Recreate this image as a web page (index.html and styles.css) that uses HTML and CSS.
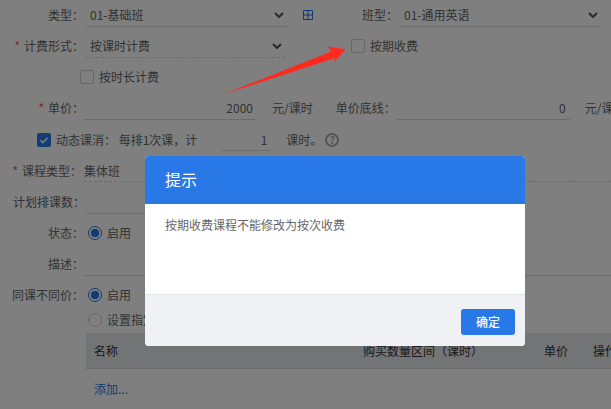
FILE: index.html
```html
<!DOCTYPE html>
<html lang="zh-CN">
<head>
<meta charset="utf-8">
<title>课程设置</title>
<link rel="stylesheet" href="styles.css">
</head>
<body>
<form class="form">
  <div class="row row-up">
    <label class="label">类型：</label>
    <div class="field select w-201"><span>01-基础班</span><svg class="chev" viewBox="0 0 10 6"><path d="M1 1l4 4 4-4"/></svg></div>
    <svg class="grid-icon" viewBox="0 0 10 10"><path d="M.5.5h9v9h-9zM.5 5h9M5 .5v9"/></svg>
    <label class="label label-2">班型：</label>
    <div class="field select w-201"><span>01-通用英语</span><svg class="chev" viewBox="0 0 10 6"><path d="M1 1l4 4 4-4"/></svg></div>
  </div>
  <div class="row row-up">
    <label class="label"><i class="req">*</i>计费形式：</label>
    <div class="field select dashed w-199"><span>按课时计费</span><svg class="chev" viewBox="0 0 10 6"><path d="M1 1l4 4 4-4"/></svg></div>
    <span class="check check-term"><i class="box"></i>按期收费</span>
  </div>
  <div class="row row-up">
    <span class="check check-time"><i class="box"></i>按时长计费</span>
  </div>
  <div class="row row-up">
    <label class="label short"><i class="req">*</i>单价：</label>
    <div class="field num w-173">2000</div>
    <span class="unit">元/课时</span>
    <label class="label label-3">单价底线：</label>
    <div class="field num w-173">0</div>
    <span class="unit">元/课时</span>
  </div>
  <div class="row">
    <span class="check check-dyn"><i class="box on"><svg viewBox="0 0 12 12"><path d="M2.5 6.2l2.5 2.5 4.5-5"/></svg></i>动态课消： 每排1次课，计</span>
    <div class="field num w-49">1</div>
    <span class="unit">课时。</span>
    <span class="help">?</span>
  </div>
  <div class="row">
    <label class="label short course"><i class="req">*</i>课程类型：</label>
    <div class="field dashed grow flush"><span>集体班</span></div>
  </div>
  <div class="row">
    <label class="label plan">计划排课数：</label>
    <div class="field field-low w-201"></div>
  </div>
  <div class="row">
    <label class="label">状态：</label>
    <span class="radio"><i class="dot on"></i>启用</span>
  </div>
  <div class="row">
    <label class="label short">描述：</label>
    <div class="field field-low grow"></div>
  </div>
  <div class="row">
    <label class="label">同课不同价：</label>
    <span class="radio"><i class="dot on"></i>启用</span>
  </div>
  <div class="row row-low">
    <span class="radio indent"><i class="dot"></i>设置指定价格</span>
  </div>
  <div class="table">
    <div class="thead">
      <span class="c-name">名称</span>
      <span class="c-range">购买数量区间（课时）</span>
      <span class="c-price">单价</span>
      <span class="c-op">操作</span>
    </div>
    <a class="add">添加...</a>
  </div>
</form>

<div class="overlay"></div>
<svg class="arrow" viewBox="0 0 150 70"><path d="M8 64.500L116 21.500L112.500 16.700L130.700 19.300L118.300 32.700L120 28Z"/></svg>
<div class="dialog">
  <div class="dialog-head">提示</div>
  <div class="dialog-body">按期收费课程不能修改为按次收费</div>
  <div class="dialog-foot"><button class="btn" type="button">确定</button></div>
</div>
</body>
</html>
```
FILE: styles.css
```css
html, body { margin: 0; padding: 0; }
body {
  width: 611px; height: 409px; overflow: hidden; position: relative;
  background: #fff; color: #666;
  font: 12px/16px "Noto Sans CJK SC", "Liberation Sans", sans-serif;
}
.form { display: block; }
.row { display: flex; align-items: center; height: 31px; white-space: nowrap; }
.row-low { height: 19px; }
.label { width: 84px; flex: none; text-align: right; margin-right: 2px; }
.label.short { margin-right: 0; }
.label.course { width: 82px; margin-right: 2px; }
.label.plan { width: 85px; margin-right: 1px; }
.label.label-2 { width: 85px; margin-right: 2px; }
.label.label-3 { width: 83px; margin-right: 1px; }
.row-up > .label, .row-up > .check, .row-up > .unit, .row-up > .grid-icon { margin-bottom: 2px; }
.row-up > .field { padding-bottom: 2px; }
.req { color: #e5574d; font-style: normal; margin-right: 4px; }
.field {
  height: 22px; line-height: 22px; box-sizing: border-box; flex: none;
  border-bottom: 1px solid #d9d9d9; display: flex; align-items: center;
  justify-content: space-between; padding: 0 4px; margin-top: 1px;
}
.field-low { margin-top: 3px; }
.flush { padding-left: 0; }
.select { padding-right: 3px; }
.dashed { border-bottom: 1px dashed #d9d9d9; }
.num { justify-content: flex-end; padding-right: 4px; }
.grow { flex: 1; }
.w-201 { width: 201px; }
.w-199 { width: 199px; }
.w-173 { width: 173px; }
.w-49 { width: 49px; margin-left: 25px; }
.chev { width: 10px; height: 6px; fill: none; stroke: #555; stroke-width: 2; }
.grid-icon { width: 10px; height: 10px; margin-left: 16px; fill: none; stroke: #2878e8; stroke-width: 1; flex: none; }
.unit { margin-left: 15px; flex: none; }
.check { display: inline-flex; align-items: center; white-space: pre; }
.box {
  width: 14px; height: 14px; box-sizing: border-box; border: 1px solid #ccc; border-radius: 2px;
  margin-right: 5px; flex: none; display: block; background: #fff;
}
.box.on { background: #2878e8; border-color: #2878e8; }
.box svg { display: block; width: 12px; height: 12px; fill: none; stroke: #fff; stroke-width: 1.500; }
.check-term { margin-left: 66px; }
.check-time { margin-left: 80px; }
.check-dyn { margin-left: 37px; }
.help {
  width: 14px; height: 14px; box-sizing: border-box; border: 2px solid #aaa; border-radius: 50%;
  color: #aaa; font-size: 10px; line-height: 10px; text-align: center; font-weight: 700; margin-left: 3px;
}
.radio { display: inline-flex; align-items: center; margin-left: 2px; }
.radio.indent { margin-left: 88px; }
.dot {
  width: 14px; height: 14px; box-sizing: border-box; border: 1px solid #ccc; border-radius: 50%;
  margin-right: 5px; flex: none; display: block; background: #fff;
}
.dot.on { border: 1px solid #2878e8; background: radial-gradient(circle, #2878e8 0 4px, #fff 4.500px); }
.table { margin-left: 86px; margin-top: 4px; }
.thead {
  display: flex; align-items: center; height: 36px; box-sizing: border-box; white-space: nowrap;
  background: #e6e8ea; border-bottom: 1px solid #d9d9d9; color: #333;
}
.thead span { flex: none; }
.c-name { margin-left: 8px; width: 269px; }
.c-range { width: 181px; }
.c-price { width: 49px; }
.add { display: block; margin: 12px 0 0 8px; color: #2878e8; }
.arrow { position: absolute; left: 215px; top: 30px; width: 150px; height: 70px; fill: #ff2a1f; }
.overlay { position: absolute; inset: 0; background: rgba(0, 0, 0, .5); }
.dialog {
  position: absolute; left: 145px; top: 156px; width: 380px; height: 190px;
  background: #fff; border-radius: 4px; overflow: hidden; display: flex; flex-direction: column;
}
.dialog-head {
  height: 48px; flex: none; background: #2878e8; color: #fff; font-size: 16px; line-height: 46px; padding-left: 20px;
}
.dialog-body { flex: 1; padding: 13px 20px; color: #666; }
.dialog-foot {
  height: 52px; flex: none; box-sizing: border-box; background: #f0f1f5; border-top: 1px solid #e4e6ec;
  display: flex; justify-content: flex-end; align-items: flex-start; padding: 14px 10px 0 0;
}
.btn {
  width: 54px; height: 26px; border: 0; border-radius: 3px; background: #2878e8; color: #fff;
  font: 500 12px/26px "Noto Sans CJK SC", sans-serif; padding: 0;
}
```
